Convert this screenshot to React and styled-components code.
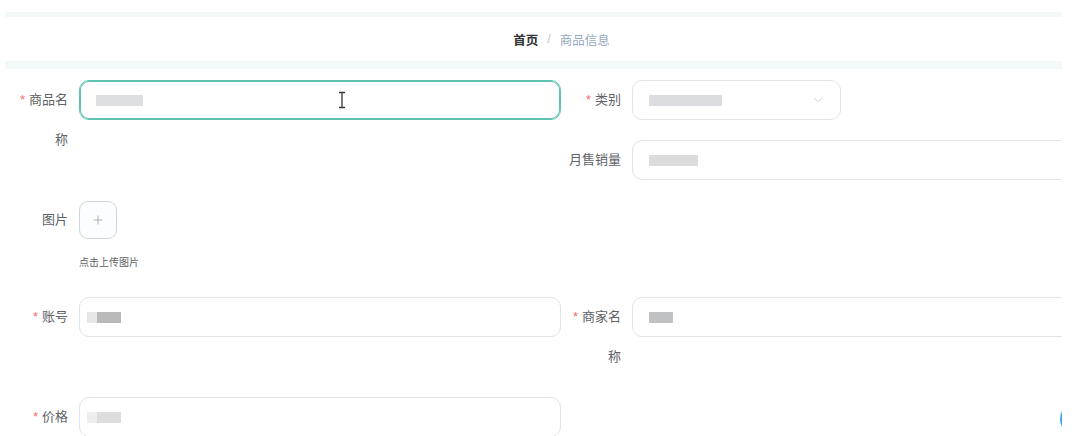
import React from 'react';
import styled, { createGlobalStyle } from 'styled-components';
import { ChevronDown, Plus } from 'lucide-react';

const GlobalStyle = createGlobalStyle`
  html, body {
    margin: 0;
    padding: 0;
    background: #fff;
    font-family: "Liberation Sans", "Noto Sans CJK SC", sans-serif;
    overflow: hidden;
  }
`;

const Page = styled.div`
  position: relative;
  margin-left: 5px;
  padding-top: 12px;
  width: 1057px;
  height: 424px;
  overflow: hidden;
  background: #fff;
`;

const Header = styled.div`
  height: 44px;
  border-top: 5px solid #f3f9f9;
  border-bottom: 8px solid #f3f9f9;
  display: flex;
  align-items: center;
  justify-content: center;
  padding-left: 56px;
  font-size: 12.5px;
`;

const Crumb = styled.span`
  color: ${p => (p.$current ? '#97a8be' : '#303133')};
  font-weight: ${p => (p.$current ? 400 : 700)};
`;

const Sep = styled.span`
  margin: 0 9px;
  color: #c0c4cc;
`;

const Form = styled.div`
  display: grid;
  grid-template-columns: 550px 550px;
  column-gap: 3px;
  row-gap: 20px;
  padding: 11px 0 0 6px;
  align-items: start;
`;

const Item = styled.div`
  display: flex;
  align-items: flex-start;
  grid-column: ${p => p.$col};
  grid-row: ${p => p.$row};
`;

const Label = styled.label`
  width: 68px;
  flex-shrink: 0;
  box-sizing: border-box;
  padding-right: 11px;
  text-align: right;
  line-height: 40px;
  font-size: 13px;
  color: #606266;
  word-break: break-all;

  ${p =>
    p.$required &&
    `&::before {
      content: "*";
      color: #f56c6c;
      margin-right: 4px;
    }`}
`;

const Input = styled.div`
  position: relative;
  box-sizing: border-box;
  width: ${p => p.$width || '482px'};
  flex-shrink: 0;
  height: 40px;
  border: 1px solid ${p => (p.$focus ? '#5fc2b0' : '#e0e3e8')};
  box-shadow: ${p => (p.$focus ? 'inset 0 0 0 1px #5fc2b0' : 'none')};
  border-radius: 10px;
  padding: 0 14px 0 ${p => p.$pad || 16}px;
  display: flex;
  align-items: center;
  background: #fff;
`;

const Redact = styled.span`
  display: inline-block;
  height: 11px;
  width: ${p => p.$w}px;
  background: ${p => p.$c || '#dcdcdc'};
`;

const Arrow = styled.span`
  margin-left: auto;
  margin-right: 1px;
  display: flex;
  color: #c0c4cc;
`;

const Cursor = styled.svg`
  position: absolute;
  left: 258px;
  top: 10px;
`;

const UploadWrap = styled.div`
  display: flex;
  flex-direction: column;
  padding-top: 1px;
  padding-bottom: 7px;
`;

const UploadBox = styled.div`
  width: 38px;
  height: 38px;
  box-sizing: border-box;
  border: 1px solid #cdd6e0;
  border-radius: 9px;
  background: #fbfdff;
  display: flex;
  align-items: center;
  justify-content: center;
  color: #8c939d;
`;

const Hint = styled.div`
  margin-top: 17px;
  font-size: 10px;
  line-height: 14px;
  color: #606266;
`;

const EdgeClip = styled.div`
  position: absolute;
  left: 1055px;
  top: 404px;
  width: 4px;
  height: 28px;
  overflow: hidden;
`;

const Ring = styled.div`
  width: 26px;
  height: 26px;
  border-radius: 50%;
  border: 2px solid #3fa9f5;
  box-shadow: 0 0 3px #9fd3fa;
`;

export default function App() {
  return (
    <>
      <GlobalStyle />
      <Page>
        <Header>
          <Crumb>首页</Crumb>
          <Sep>/</Sep>
          <Crumb $current>商品信息</Crumb>
        </Header>

        <Form>
          <Item $col="1" $row="1 / span 2">
            <Label $required>商品名称</Label>
            <Input $focus>
              <Redact $w={47} $c="#dedfe0" />
              <Cursor width="8" height="18" viewBox="0 0 8 18">
                <path d="M1 1.5h6M4 1.5v15M1 16.5h6" stroke="#333" strokeWidth="1.3" fill="none" />
              </Cursor>
            </Input>
          </Item>

          <Item $col="2" $row="1">
            <Label $required>类别</Label>
            <Input $width="209px">
              <Redact $w={73} $c="#dcdde0" />
              <Arrow>
                <ChevronDown size={14} strokeWidth={1.3} />
              </Arrow>
            </Input>
          </Item>

          <Item $col="2" $row="2">
            <Label>月售销量</Label>
            <Input>
              <Redact $w={49} $c="#dcdcdd" />
            </Input>
          </Item>

          <Item $col="1" $row="3">
            <Label>图片</Label>
            <UploadWrap>
              <UploadBox>
                <Plus size={14} strokeWidth={1.2} />
              </UploadBox>
              <Hint>点击上传图片</Hint>
            </UploadWrap>
          </Item>

          <Item $col="1" $row="4">
            <Label $required>账号</Label>
            <Input $pad={7}>
              <Redact $w={10} $c="#e6e6e6" />
              <Redact $w={24} $c="#b9b9b9" />
            </Input>
          </Item>

          <Item $col="2" $row="4">
            <Label $required>商家名称</Label>
            <Input>
              <Redact $w={24} $c="#bfc1c2" />
            </Input>
          </Item>

          <Item $col="1" $row="5">
            <Label $required>价格</Label>
            <Input $pad={7}>
              <Redact $w={10} $c="#eeeeee" />
              <Redact $w={24} $c="#dddddd" />
            </Input>
          </Item>
        </Form>

        <EdgeClip>
          <Ring />
        </EdgeClip>
      </Page>
    </>
  );
}
